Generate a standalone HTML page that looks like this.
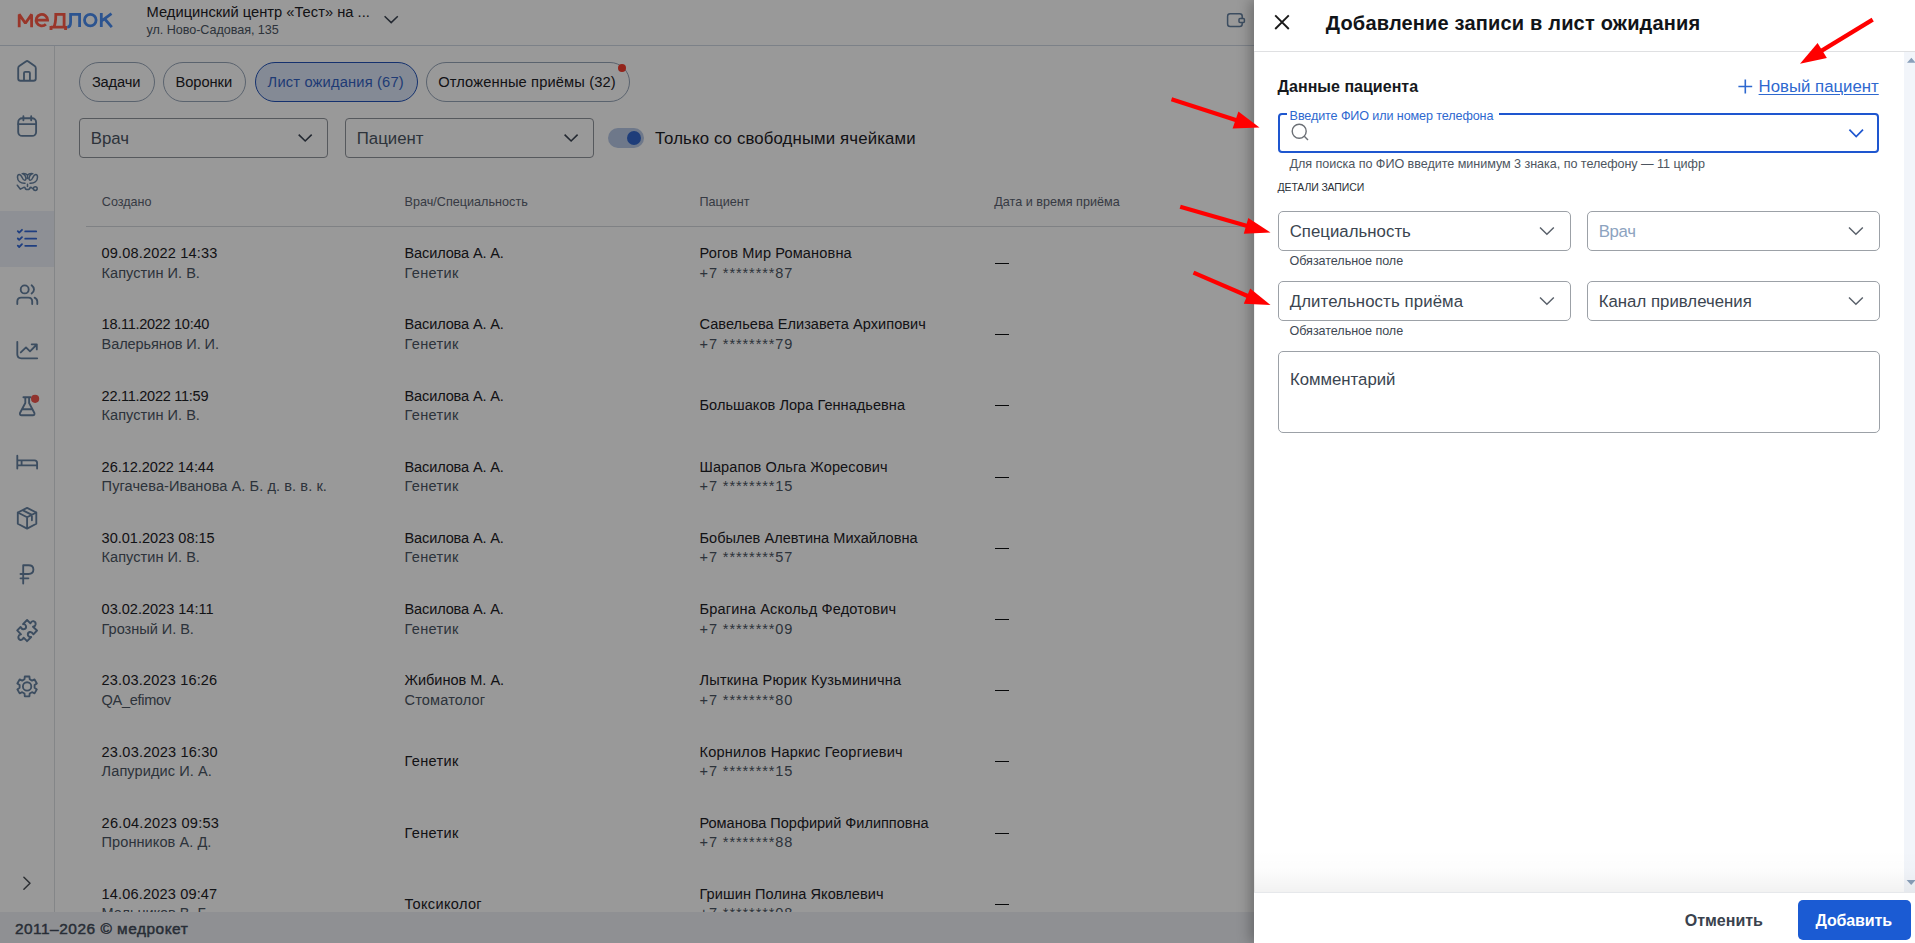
<!DOCTYPE html><html><head><meta charset="utf-8"><title>Лист ожидания</title><style>
*{margin:0;padding:0;box-sizing:border-box}
html,body{width:1915px;height:943px;overflow:hidden;background:#fff}
body{position:relative;font-family:"Liberation Sans",sans-serif}
.t{position:absolute;white-space:nowrap;line-height:1}
.ab{position:absolute;overflow:visible}
#hdr{position:absolute;left:0;top:0;width:1915px;height:46px;border-bottom:1px solid #cfd8e3;background:#fff}
#sb{position:absolute;left:0;top:46px;width:55px;height:866px;border-right:1px solid #dcdfe3;background:#fff}
#ftr{position:absolute;left:0;top:912px;width:1915px;height:31px;background:#eef1f6}
.tab{position:absolute;top:62px;height:39.6px;border:1px solid #97a5b8;border-radius:20px}
.tab.act{background:#dde7f8;border:1.3px solid #2353b8}
.sel{position:absolute;border:1px solid #8f949b;border-radius:4px}
.dsel{position:absolute;height:39.4px;border:1px solid #9ca1a7;border-radius:5px}
#ov{position:absolute;left:0;top:0;width:1915px;height:943px;background:rgba(0,0,0,0.4)}
#drw{position:absolute;left:1254px;top:0;width:661px;height:943px;background:#fff;box-shadow:-4px 0 12px rgba(0,0,0,0.28)}
</style></head><body><div id="hdr"></div><svg class="ab" style="left:0;top:0" width="120" height="40" viewBox="0 0 120 40" fill="none" stroke-width="2.8"><g stroke="#ff5b46"><path d="M19.2 27.2 V14.4 L25.4 23.2 L31.6 14.4 V27.2" stroke-linejoin="bevel"/><path d="M17.8 13.1 H20.6 M30.2 13.1 H33" stroke-width="0.1"/><path d="M36.2 20.1 H47.6 A5.75 5.75 0 1 0 45.9 24.2"/><path d="M51 27.2 H65.6 M53.6 27.2 Q55.8 24 55.8 14.4 H64.1 V27.2"/><path d="M51 26 V30 M65.6 26 V30" stroke-width="2.9"/></g><g stroke="#4a8cf0"><path d="M67.2 27.2 Q70.6 27.2 70.6 22 V14.4 H79.6 V27"/><circle cx="90.3" cy="20.1" r="5.8"/><path d="M101.3 13 V27 M101.3 21.2 L111.5 13.6 M104.8 19 L111.8 27.2"/></g></svg><div class="t" style="left:146.60px;top:4px;font-size:14.7px;line-height:16px;color:#1d2126;letter-spacing:0.01px;">Медицинский центр «Тест» на ...</div><div class="t" style="left:146.60px;top:23px;font-size:12.6px;line-height:14px;color:#4b5563;letter-spacing:-0.053px;">ул. Ново-Садовая, 135</div><svg class="ab" style="left:0;top:0" width="1915" height="943" viewBox="0 0 1915 943"><path d="M384.6 16.2 L391.2 22.6 L397.8 16.2" fill="none" stroke="#3b4452" stroke-width="1.5"/><rect x="1227.6" y="13.7" width="14.6" height="12.8" rx="2.5" fill="none" stroke="#6580a0" stroke-width="1.5"/><rect x="1239" y="18.5" width="5.4" height="4" rx="1" fill="#fff" stroke="#6580a0" stroke-width="1.5"/></svg><div id="sb"></div><div style="position:absolute;left:0;top:211px;width:54px;height:56px;background:#edf1f8"></div><svg class="ab" style="left:0;top:0" width="60" height="943" viewBox="0 0 60 943" fill="none" stroke="#6580a0" stroke-width="1.85" stroke-linecap="round" stroke-linejoin="round"><path d="M18.2 68.2 Q18.2 66.9 19.3 66.1 L25.9 61.4 Q27.1 60.6 28.3 61.4 L34.7 66.1 Q35.8 66.9 35.8 68.2 L35.8 78.4 Q35.8 80.7 33.5 80.7 L20.5 80.7 Q18.2 80.7 18.2 78.4 Z M24 80.5 V73 Q24 71.8 25.2 71.8 H28.7 Q29.9 71.8 29.9 73 V80.5"/><rect x="18.2" y="118.2" width="17.9" height="17.7" rx="4"/><path d="M18.2 124.1 H36.1 M23.4 116.2 V120.2 M31.2 116.2 V120.2"/><path stroke-width="1.5" d="M25 183.3 C20.5 183.6 17.5 181 17.5 177.2 C17.5 175.3 18.3 174.4 19.1 174.4 C20.5 174.4 21.6 176.2 22.4 178 C23.1 179.6 23.8 180.3 24.7 180.3 C25.6 180.3 26.1 179.4 25.9 178 C25.6 176 24.6 174.6 23.4 174 M22.2 173.7 C24.6 173.2 26.4 173.9 27.5 175.3 C28.6 173.9 30.4 173.2 32.8 173.7 M27.5 175.3 V178.6 M30 183.3 C34.5 183.6 37.5 181 37.5 177.2 C37.5 175.3 36.7 174.4 35.9 174.4 C34.5 174.4 33.4 176.2 32.6 178 C31.9 179.6 31.2 180.3 30.3 180.3 C29.4 180.3 28.9 179.4 29.1 178 C29.4 176 30.4 174.6 31.6 174 M27.5 184.3 V186.4 M17.3 185.2 L20.4 189.2 L24.3 187.2 M25 187.6 C25.3 190.2 29.7 190.2 30 187.6 M30.7 187.2 L33.3 189"/><circle cx="35.3" cy="188.6" r="1.9" stroke-width="1.5"/><circle cx="24.7" cy="289.4" r="4"/><path d="M31.6 285.3 Q34 287.2 34 289.4 Q34 291.6 31.6 293.4 M17.3 304 V301.5 Q17.3 297.6 21.2 297.6 H28.3 Q32.2 297.6 32.2 301.5 V304 M34.6 297.6 Q37.3 299 37.3 301.5 V304"/><path d="M17.3 341.8 V354.3 Q17.3 358.3 21.3 358.3 H37.2 M20.8 352.4 L26 347.4 L30 351.3 L36.3 345 M31.7 344.3 H36.8 V349.4"/><path d="M23.4 397.2 H30.6 M25.3 397.4 V403 L20 413 Q19.4 415.2 21.6 415.2 H32.8 Q35 415.2 34.4 413 L29.1 403 V397.4 M21.9 409.2 H32.5"/><path d="M17.3 455.7 V468.5 M17.3 460.3 H34.5 Q37.1 460.3 37.1 462.9 V468.5 M17.3 465.4 H37.1 M21.6 460.5 V465.2"/><path d="M27.1 507.9 L36.3 512.5 V523.8 L27.1 528.6 L17.8 523.8 V512.5 Z M17.8 512.5 L27.1 517.3 L36.3 512.5 M27.1 517.3 V528.4 M22.5 510.2 L31.9 514.9 V520.2"/><path d="M23.2 583.5 V565.2 H28.6 Q33.4 565.2 33.4 569.6 Q33.4 574 28.6 574 H20.5 M20.5 578.3 H28.4"/><path stroke-width="1.9" d="M27.1 620 L30.4 623.3 Q31.5 620.8 33.5 621.2 Q36 622 35.6 624.5 Q35.2 626.5 33 626.8 L37 630.5 L33.4 634.3 Q31.8 631.5 29.6 632 Q27.2 633 28 635.5 Q28.8 637.3 31.2 637 L27.1 641.2 L23.6 637.7 Q22.6 640.4 20.4 640 Q18 639.2 18.4 636.6 Q18.8 634.6 21 634.4 L17.2 630.4 L20.6 627 Q22 629.8 24.3 629.2 Q26.6 628.4 26 626 Q25.2 623.8 23 624.2 Z"/><path d="M24.81 676.46 L29.39 676.46 L29.70 679.26 L31.99 680.58 L34.56 679.44 L36.85 683.42 L34.58 685.08 L34.58 687.72 L36.85 689.38 L34.56 693.36 L31.99 692.22 L29.70 693.54 L29.39 696.34 L24.81 696.34 L24.50 693.54 L22.21 692.22 L19.64 693.36 L17.35 689.38 L19.62 687.72 L19.62 685.08 L17.35 683.42 L19.64 679.44 L22.21 680.58 L24.50 679.26 Z"/><circle cx="27.1" cy="686.4" r="4.2"/><path stroke="#4a4f56" stroke-width="1.5" d="M23.9 877.3 L30 883.3 L23.9 889.3"/><g stroke="#3468d6" stroke-width="1.8"><path d="M17.8 231.2 L19.2 232.6 L22 229.8 M17.8 238.5 L19.2 239.9 L22 237.1 M17.8 245.6 L19.2 247 L22 244.2 M25.2 231.4 H36.2 M25.2 238.7 H36.2 M25.2 245.8 H36.2"/></g><circle cx="35.1" cy="398.8" r="4.1" fill="#f2554d" stroke="none"/></svg><div class="tab" style="left:79.2px;width:75.4px"></div><div class="t" style="left:91.90px;top:74px;font-size:14.7px;line-height:16px;color:#1d2126;letter-spacing:-0.171px;">Задачи</div><div class="tab" style="left:163px;width:83.4px"></div><div class="t" style="left:175.50px;top:74px;font-size:14.7px;line-height:16px;color:#1d2126;letter-spacing:-0.066px;">Воронки</div><div class="tab act" style="left:255.2px;width:162.5px"></div><div class="t" style="left:267.60px;top:74px;font-size:14.7px;line-height:16px;color:#3563c4;letter-spacing:0.168px;">Лист ожидания (67)</div><div class="tab" style="left:426px;width:203.7px"></div><div class="t" style="left:438.20px;top:74px;font-size:14.7px;line-height:16px;color:#1d2126;letter-spacing:0.119px;">Отложенные приёмы (32)</div><div style="position:absolute;left:617.8px;top:64.2px;width:8px;height:8px;border-radius:50%;background:#f63c2e"></div><div class="sel" style="left:79.2px;top:118.4px;width:249.3px;height:39.4px"></div><div class="t" style="left:90.80px;top:129px;font-size:16.8px;line-height:19px;color:#4b5563;">Врач</div><div class="sel" style="left:345.4px;top:118.4px;width:248.8px;height:39.4px"></div><div class="t" style="left:356.80px;top:129px;font-size:16.8px;line-height:19px;color:#4b5563;">Пациент</div><svg class="ab" style="left:0;top:0" width="1000" height="200" viewBox="0 0 1000 200" fill="none" stroke="#3b4452" stroke-width="1.6"><path d="M298.7 134.6 L305.2 141 L311.7 134.6"/><path d="M564.6 134.6 L571.1 141 L577.6 134.6"/></svg><div style="position:absolute;left:608px;top:128.2px;width:36px;height:19.4px;border-radius:10px;background:#b7c8e6"></div><div style="position:absolute;left:627px;top:130.8px;width:14.2px;height:14.2px;border-radius:50%;background:#3266cc"></div><div class="t" style="left:655.00px;top:129px;font-size:16.8px;line-height:19px;color:#1d2126;letter-spacing:0.134px;">Только со свободными ячейками</div><div class="t" style="left:101.80px;top:195px;font-size:12.6px;line-height:14px;color:#5b6270;">Создано</div><div class="t" style="left:404.50px;top:195px;font-size:12.6px;line-height:14px;color:#5b6270;letter-spacing:0.022px;">Врач/Специальность</div><div class="t" style="left:699.50px;top:195px;font-size:12.6px;line-height:14px;color:#5b6270;">Пациент</div><div class="t" style="left:994.20px;top:195px;font-size:12.6px;line-height:14px;color:#5b6270;letter-spacing:0.023px;">Дата и время приёма</div><div style="position:absolute;left:86px;top:226px;width:1168px;height:1px;background:#d4d7dc"></div><div style="position:absolute;left:55px;top:46px;width:1200px;height:866px;overflow:hidden"><div style="position:absolute;left:-55px;top:-46px;width:1255px;height:943px"><div class="t" style="left:101.60px;top:245px;font-size:14.56px;line-height:16px;color:#1d2126;letter-spacing:0.163px;">09.08.2022 14:33</div><div class="t" style="left:101.60px;top:265px;font-size:14.56px;line-height:16px;color:#4b5563;letter-spacing:0.026px;">Капустин И. В.</div><div class="t" style="left:404.50px;top:245px;font-size:14.56px;line-height:16px;color:#1d2126;letter-spacing:-0.135px;">Василова А. А.</div><div class="t" style="left:404.50px;top:265px;font-size:14.56px;line-height:16px;color:#4b5563;letter-spacing:0.344px;">Генетик</div><div class="t" style="left:699.50px;top:245px;font-size:14.56px;line-height:16px;color:#1d2126;letter-spacing:0.142px;">Рогов Мир Романовна</div><div class="t" style="left:699.50px;top:265px;font-size:14.56px;line-height:16px;color:#4b5563;letter-spacing:0.903px;">+7 ********87</div><div style="position:absolute;left:995px;top:263px;width:14px;height:1px;background:#0e1012"></div><div class="t" style="left:101.60px;top:316px;font-size:14.56px;line-height:16px;color:#1d2126;letter-spacing:-0.298px;">18.11.2022 10:40</div><div class="t" style="left:101.60px;top:336px;font-size:14.56px;line-height:16px;color:#4b5563;letter-spacing:-0.097px;">Валерьянов И. И.</div><div class="t" style="left:404.50px;top:316px;font-size:14.56px;line-height:16px;color:#1d2126;letter-spacing:-0.135px;">Василова А. А.</div><div class="t" style="left:404.50px;top:336px;font-size:14.56px;line-height:16px;color:#4b5563;letter-spacing:0.344px;">Генетик</div><div class="t" style="left:699.50px;top:316px;font-size:14.56px;line-height:16px;color:#1d2126;letter-spacing:0.043px;">Савельева Елизавета Архипович</div><div class="t" style="left:699.50px;top:336px;font-size:14.56px;line-height:16px;color:#4b5563;letter-spacing:0.903px;">+7 ********79</div><div style="position:absolute;left:995px;top:334px;width:14px;height:1px;background:#0e1012"></div><div class="t" style="left:101.60px;top:388px;font-size:14.56px;line-height:16px;color:#1d2126;letter-spacing:-0.28px;">22.11.2022 11:59</div><div class="t" style="left:101.60px;top:407px;font-size:14.56px;line-height:16px;color:#4b5563;letter-spacing:0.026px;">Капустин И. В.</div><div class="t" style="left:404.50px;top:388px;font-size:14.56px;line-height:16px;color:#1d2126;letter-spacing:-0.135px;">Василова А. А.</div><div class="t" style="left:404.50px;top:407px;font-size:14.56px;line-height:16px;color:#4b5563;letter-spacing:0.344px;">Генетик</div><div class="t" style="left:699.50px;top:397px;font-size:14.56px;line-height:16px;color:#1d2126;letter-spacing:0.038px;">Большаков Лора Геннадьевна</div><div style="position:absolute;left:995px;top:405px;width:14px;height:1px;background:#0e1012"></div><div class="t" style="left:101.60px;top:459px;font-size:14.56px;line-height:16px;color:#1d2126;letter-spacing:-0.057px;">26.12.2022 14:44</div><div class="t" style="left:101.60px;top:478px;font-size:14.56px;line-height:16px;color:#4b5563;letter-spacing:0.082px;">Пугачева-Иванова А. Б. д. в. в. к.</div><div class="t" style="left:404.50px;top:459px;font-size:14.56px;line-height:16px;color:#1d2126;letter-spacing:-0.135px;">Василова А. А.</div><div class="t" style="left:404.50px;top:478px;font-size:14.56px;line-height:16px;color:#4b5563;letter-spacing:0.344px;">Генетик</div><div class="t" style="left:699.50px;top:459px;font-size:14.56px;line-height:16px;color:#1d2126;letter-spacing:0.084px;">Шарапов Ольга Жоресович</div><div class="t" style="left:699.50px;top:478px;font-size:14.56px;line-height:16px;color:#4b5563;letter-spacing:0.903px;">+7 ********15</div><div style="position:absolute;left:995px;top:477px;width:14px;height:1px;background:#0e1012"></div><div class="t" style="left:101.60px;top:530px;font-size:14.56px;line-height:16px;color:#1d2126;letter-spacing:-0.01px;">30.01.2023 08:15</div><div class="t" style="left:101.60px;top:549px;font-size:14.56px;line-height:16px;color:#4b5563;letter-spacing:0.026px;">Капустин И. В.</div><div class="t" style="left:404.50px;top:530px;font-size:14.56px;line-height:16px;color:#1d2126;letter-spacing:-0.135px;">Василова А. А.</div><div class="t" style="left:404.50px;top:549px;font-size:14.56px;line-height:16px;color:#4b5563;letter-spacing:0.344px;">Генетик</div><div class="t" style="left:699.50px;top:530px;font-size:14.56px;line-height:16px;color:#1d2126;letter-spacing:0.02px;">Бобылев Алевтина Михайловна</div><div class="t" style="left:699.50px;top:549px;font-size:14.56px;line-height:16px;color:#4b5563;letter-spacing:0.903px;">+7 ********57</div><div style="position:absolute;left:995px;top:548px;width:14px;height:1px;background:#0e1012"></div><div class="t" style="left:101.60px;top:601px;font-size:14.56px;line-height:16px;color:#1d2126;letter-spacing:-0.018px;">03.02.2023 14:11</div><div class="t" style="left:101.60px;top:621px;font-size:14.56px;line-height:16px;color:#4b5563;letter-spacing:-0.031px;">Грозный И. В.</div><div class="t" style="left:404.50px;top:601px;font-size:14.56px;line-height:16px;color:#1d2126;letter-spacing:-0.135px;">Василова А. А.</div><div class="t" style="left:404.50px;top:621px;font-size:14.56px;line-height:16px;color:#4b5563;letter-spacing:0.344px;">Генетик</div><div class="t" style="left:699.50px;top:601px;font-size:14.56px;line-height:16px;color:#1d2126;letter-spacing:0.176px;">Брагина Аскольд Федотович</div><div class="t" style="left:699.50px;top:621px;font-size:14.56px;line-height:16px;color:#4b5563;letter-spacing:0.903px;">+7 ********09</div><div style="position:absolute;left:995px;top:619px;width:14px;height:1px;background:#0e1012"></div><div class="t" style="left:101.60px;top:672px;font-size:14.56px;line-height:16px;color:#1d2126;letter-spacing:0.156px;">23.03.2023 16:26</div><div class="t" style="left:101.60px;top:692px;font-size:14.56px;line-height:16px;color:#4b5563;letter-spacing:-0.302px;">QA_efimov</div><div class="t" style="left:404.50px;top:672px;font-size:14.56px;line-height:16px;color:#1d2126;letter-spacing:-0.02px;">Жибинов М. А.</div><div class="t" style="left:404.50px;top:692px;font-size:14.56px;line-height:16px;color:#4b5563;letter-spacing:0.16px;">Стоматолог</div><div class="t" style="left:699.50px;top:672px;font-size:14.56px;line-height:16px;color:#1d2126;letter-spacing:0.208px;">Лыткина Рюрик Кузьминична</div><div class="t" style="left:699.50px;top:692px;font-size:14.56px;line-height:16px;color:#4b5563;letter-spacing:0.903px;">+7 ********80</div><div style="position:absolute;left:995px;top:690px;width:14px;height:1px;background:#0e1012"></div><div class="t" style="left:101.60px;top:744px;font-size:14.56px;line-height:16px;color:#1d2126;letter-spacing:0.183px;">23.03.2023 16:30</div><div class="t" style="left:101.60px;top:763px;font-size:14.56px;line-height:16px;color:#4b5563;letter-spacing:0.082px;">Лапуридис И. А.</div><div class="t" style="left:404.50px;top:753px;font-size:14.56px;line-height:16px;color:#1d2126;letter-spacing:0.344px;">Генетик</div><div class="t" style="left:699.50px;top:744px;font-size:14.56px;line-height:16px;color:#1d2126;letter-spacing:0.207px;">Корнилов Наркис Георгиевич</div><div class="t" style="left:699.50px;top:763px;font-size:14.56px;line-height:16px;color:#4b5563;letter-spacing:0.903px;">+7 ********15</div><div style="position:absolute;left:995px;top:761px;width:14px;height:1px;background:#0e1012"></div><div class="t" style="left:101.60px;top:815px;font-size:14.56px;line-height:16px;color:#1d2126;letter-spacing:0.27px;">26.04.2023 09:53</div><div class="t" style="left:101.60px;top:834px;font-size:14.56px;line-height:16px;color:#4b5563;letter-spacing:0.065px;">Пронников А. Д.</div><div class="t" style="left:404.50px;top:825px;font-size:14.56px;line-height:16px;color:#1d2126;letter-spacing:0.344px;">Генетик</div><div class="t" style="left:699.50px;top:815px;font-size:14.56px;line-height:16px;color:#1d2126;letter-spacing:-0.022px;">Романова Порфирий Филипповна</div><div class="t" style="left:699.50px;top:834px;font-size:14.56px;line-height:16px;color:#4b5563;letter-spacing:0.903px;">+7 ********88</div><div style="position:absolute;left:995px;top:833px;width:14px;height:1px;background:#0e1012"></div><div class="t" style="left:101.60px;top:886px;font-size:14.56px;line-height:16px;color:#1d2126;letter-spacing:0.156px;">14.06.2023 09:47</div><div class="t" style="left:101.60px;top:905px;font-size:14.56px;line-height:16px;color:#4b5563;letter-spacing:-0.027px;">Мельников В. Б.</div><div class="t" style="left:404.50px;top:896px;font-size:14.56px;line-height:16px;color:#1d2126;letter-spacing:0.335px;">Токсиколог</div><div class="t" style="left:699.50px;top:886px;font-size:14.56px;line-height:16px;color:#1d2126;letter-spacing:0.061px;">Гришин Полина Яковлевич</div><div class="t" style="left:699.50px;top:905px;font-size:14.56px;line-height:16px;color:#4b5563;letter-spacing:0.903px;">+7 ********08</div><div style="position:absolute;left:995px;top:904px;width:14px;height:1px;background:#0e1012"></div></div></div><div id="ftr"></div><div class="t" style="left:14.90px;top:920px;font-size:15.45px;line-height:17px;color:#434c5a;letter-spacing:0.509px;-webkit-text-stroke:0.45px #434c5a;">2011–2026 © медрокет</div><div id="ov"></div><div id="drw"></div><svg class="ab" style="left:0;top:0" width="1915" height="943" viewBox="0 0 1915 943" fill="none"><path d="M1275.2 15.4 L1288.8 29 M1288.8 15.4 L1275.2 29" stroke="#1a1a1a" stroke-width="1.9"/></svg><div class="t" style="left:1325.80px;top:12px;font-size:20.0px;line-height:22px;color:#111418;font-weight:700;letter-spacing:0.181px;">Добавление записи в лист ожидания</div><div style="position:absolute;left:1254px;top:51px;width:661px;height:1px;background:#dfe0e2"></div><div style="position:absolute;left:1254px;top:52px;width:1px;height:840px;background:#f1f1f1"></div><div style="position:absolute;left:1904px;top:52px;width:11px;height:840px;background:#f2f5fa"></div><svg class="ab" style="left:1900px;top:50px" width="15" height="843" viewBox="1900 50 15 843"><path d="M1907 62.8 L1911.4 57.8 L1915.8 62.8 Z M1906.6 879.9 L1911.2 885 L1915.8 879.9 Z" fill="#8aa0ba"/></svg><div class="t" style="left:1277.60px;top:78px;font-size:16.0px;line-height:17px;color:#15181c;font-weight:700;letter-spacing:0.024px;">Данные пациента</div><svg class="ab" style="left:1730px;top:70px" width="30" height="30" viewBox="1730 70 30 30"><path d="M1745.3 79.6 V93.4 M1738.4 86.5 H1752.2" stroke="#2e68cf" stroke-width="1.6" fill="none"/></svg><div class="t" style="left:1758.60px;top:77px;font-size:16.8px;line-height:19px;color:#2e68cf;letter-spacing:0.001px;text-decoration:underline;text-underline-offset:2px;text-decoration-thickness:1px;">Новый пациент</div><div style="position:absolute;left:1278.4px;top:113.4px;width:601px;height:39.8px;border:2px solid #1e56cf;border-radius:4px;box-sizing:border-box"></div><div style="position:absolute;left:1287px;top:110px;width:212px;height:6px;background:#fff"></div><div class="t" style="left:1289.60px;top:109px;font-size:12.6px;line-height:14px;color:#2e68cf;letter-spacing:-0.112px;">Введите ФИО или номер телефона</div><svg class="ab" style="left:1280px;top:115px" width="600" height="40" viewBox="1280 115 600 40" fill="none"><circle cx="1299.2" cy="131.2" r="7" stroke="#6b6f75" stroke-width="1.4"/><path d="M1304.3 136.3 L1308 140" stroke="#6b6f75" stroke-width="1.4"/><path d="M1849.4 129.6 L1856.2 136.5 L1863 129.6" stroke="#1e56cf" stroke-width="1.7"/></svg><div class="t" style="left:1289.60px;top:157px;font-size:12.6px;line-height:14px;color:#4d5560;letter-spacing:-0.05px;">Для поиска по ФИО введите минимум 3 знака, по телефону — 11 цифр</div><div class="t" style="left:1277.60px;top:181px;font-size:10.5px;line-height:12px;color:#2a2f36;letter-spacing:-0.135px;">ДЕТАЛИ ЗАПИСИ</div><div class="dsel" style="left:1278.3px;top:211.2px;width:292.7px"></div><div class="t" style="left:1289.70px;top:222px;font-size:16.8px;line-height:19px;color:#3b4550;letter-spacing:0.029px;">Специальность</div><svg class="ab" style="left:1538px;top:221.2px" width="20" height="20" viewBox="1538 221.2 20 20"><path d="M1540 227.6 L1546.9 234.5 L1553.8 227.6" fill="none" stroke="#59606a" stroke-width="1.45"/></svg><div class="dsel" style="left:1587.3px;top:211.2px;width:292.4px"></div><div class="t" style="left:1598.70px;top:222px;font-size:16.8px;line-height:19px;color:#8da3c0;letter-spacing:-0.326px;">Врач</div><svg class="ab" style="left:1847.4px;top:221.2px" width="20" height="20" viewBox="1847.4 221.2 20 20"><path d="M1849.4 227.6 L1856.3000000000002 234.5 L1863.2 227.6" fill="none" stroke="#59606a" stroke-width="1.45"/></svg><div class="t" style="left:1289.50px;top:254px;font-size:12.6px;line-height:14px;color:#404853;letter-spacing:-0.056px;">Обязательное поле</div><div class="dsel" style="left:1278.3px;top:281.3px;width:292.7px"></div><div class="t" style="left:1289.70px;top:292px;font-size:16.8px;line-height:19px;color:#3b4550;letter-spacing:0.11px;">Длительность приёма</div><svg class="ab" style="left:1538px;top:291.3px" width="20" height="20" viewBox="1538 291.3 20 20"><path d="M1540 297.7 L1546.9 304.6 L1553.8 297.7" fill="none" stroke="#59606a" stroke-width="1.45"/></svg><div class="dsel" style="left:1587.3px;top:281.3px;width:292.4px"></div><div class="t" style="left:1598.70px;top:292px;font-size:16.8px;line-height:19px;color:#3b4550;letter-spacing:0.017px;">Канал привлечения</div><svg class="ab" style="left:1847.4px;top:291.3px" width="20" height="20" viewBox="1847.4 291.3 20 20"><path d="M1849.4 297.7 L1856.3000000000002 304.6 L1863.2 297.7" fill="none" stroke="#59606a" stroke-width="1.45"/></svg><div class="t" style="left:1289.50px;top:324px;font-size:12.6px;line-height:14px;color:#404853;letter-spacing:-0.056px;">Обязательное поле</div><div style="position:absolute;left:1278.4px;top:351.3px;width:601.4px;height:81.5px;border:1px solid #9ca1a7;border-radius:5px;box-sizing:border-box"></div><div class="t" style="left:1289.90px;top:370px;font-size:16.8px;line-height:19px;color:#3b4550;letter-spacing:-0.011px;">Комментарий</div><div style="position:absolute;left:1254px;top:850px;width:661px;height:42px;background:linear-gradient(to bottom,rgba(0,0,0,0) 0%,rgba(0,0,0,0.012) 50%,rgba(0,0,0,0.05) 100%)"></div><div style="position:absolute;left:1254px;top:891.5px;width:661px;height:1px;background:#e6e8eb"></div><div class="t" style="left:1684.70px;top:912px;font-size:16.0px;line-height:17px;color:#3a424d;font-weight:700;letter-spacing:0.002px;">Отменить</div><div style="position:absolute;left:1798.2px;top:900px;width:112.7px;height:39.8px;background:#1b5bd3;border-radius:5px"></div><div class="t" style="left:1815.50px;top:912px;font-size:16.0px;line-height:17px;color:#ffffff;font-weight:700;letter-spacing:-0.142px;">Добавить</div><svg class="ab" style="left:0;top:0" width="1915" height="943" viewBox="0 0 1915 943"><path d="M1171.5 99.3 L1242.7 122.2" stroke="#ff0000" stroke-width="4.2" fill="none"/><path d="M1259.5 127.4 L1238.4 111.5 L1232.6 128.4 Z" fill="#ff0000"/><path d="M1180.2 206.7 L1253.4 227.8" stroke="#ff0000" stroke-width="4.2" fill="none"/><path d="M1270.5 232.5 L1248.3 217.9 L1243.8 233.8 Z" fill="#ff0000"/><path d="M1193.5 272.6 L1254.0 298.8" stroke="#ff0000" stroke-width="4.2" fill="none"/><path d="M1270.5 305 L1250.2 288.5 L1243.8 303.8 Z" fill="#ff0000"/><path d="M1872.7 19.6 L1815.6 54.4" stroke="#ff0000" stroke-width="4.2" fill="none"/><path d="M1800 63.8 L1817.6 42.9 L1826.9 57.9 Z" fill="#ff0000"/></svg></body></html>
